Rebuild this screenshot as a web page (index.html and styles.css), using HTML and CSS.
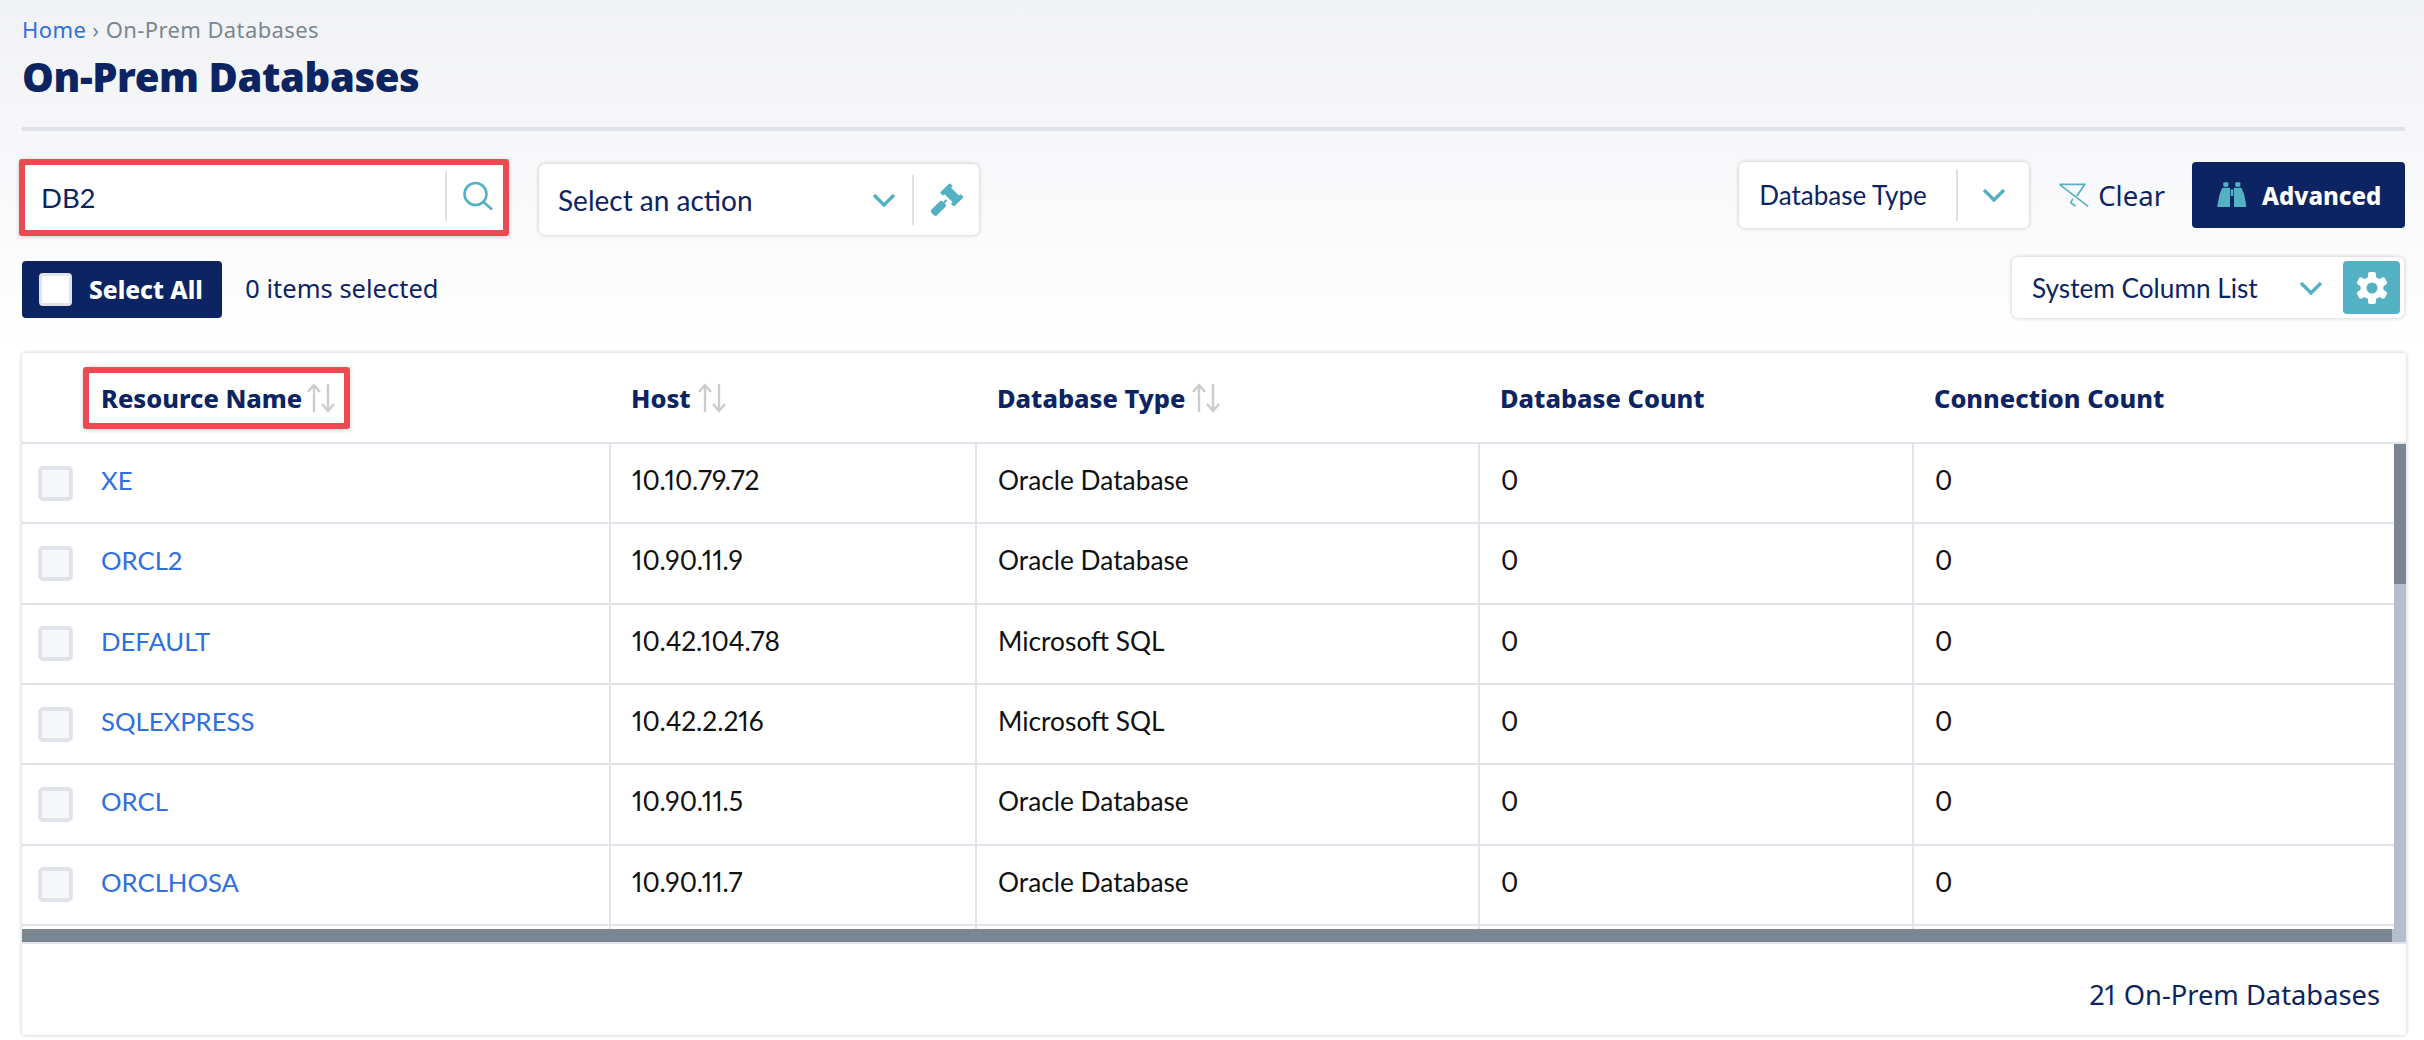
FILE: index.html
```html
<!DOCTYPE html>
<html>
<head>
  <title>On-Prem Databases</title>
  <link rel="stylesheet" href="styles.css">
</head>
<body>
  <div class="breadcrumb"><a href="#">Home</a> › On-Prem Databases</div>
  <h1>On-Prem Databases</h1>
  <hr class="rule">

  <div class="toolbar">
    <div class="search">
      <span class="search-text">DB2</span>
      <span class="search-btn">
        <svg width="32" height="30" viewBox="0 0 32 30"><circle cx="13.5" cy="13" r="11" fill="none" stroke="#54b1c4" stroke-width="2.6"/><line x1="21.5" y1="21" x2="30" y2="28.5" stroke="#54b1c4" stroke-width="2.8"/></svg>
      </span>
    </div>
    <div class="card action-select">
      <span class="select-text">Select an action</span>
      <svg class="chevron" width="24" height="14" viewBox="0 0 24 14"><polyline points="2,2 12,12 22,2" fill="none" stroke="#54b1c4" stroke-width="3.4"/></svg>
      <span class="action-btn">
        <svg width="33" height="33" viewBox="93 80 100 100"><g transform="translate(156 116) rotate(45)" fill="#54b1c4"><path d="M-30 -17 Q-30 -21 -26 -21 H-20 Q-17 -21 -17 -18 V-14 H17 V-18 Q17 -21 20 -21 H26 Q30 -21 30 -17 V17 Q30 21 26 21 H20 Q17 21 17 18 V14 H-17 V18 Q-17 21 -20 21 H-26 Q-30 21 -30 17 Z"/><path d="M-3 22 H3 V34 H8 Q12 34 12 38 V74 Q12 82 4 82 H-4 Q-12 82 -12 74 V38 Q-12 34 -8 34 H-3 Z"/></g></svg>
      </span>
    </div>
    <div class="spacer"></div>
    <div class="card type-select">
      <span class="select-text type-text">Database Type</span>
      <span class="type-arrow">
        <svg class="chevron" width="24" height="14" viewBox="0 0 24 14"><polyline points="2,2 12,12 22,2" fill="none" stroke="#54b1c4" stroke-width="3.4"/></svg>
      </span>
    </div>
    <a class="clear" href="#">
      <svg width="32" height="25" viewBox="60 65 95 75"><path d="M64 69 H140 L116 104 M64 69 L150 135 M104 112 L98 124 L112 134" fill="none" stroke="#54b1c4" stroke-width="5"/></svg>
      Clear
    </a>
    <button class="advanced">
      <svg width="30" height="26" viewBox="534 64 90 78"><g fill="#54b1c4"><rect x="553" y="65" width="15" height="13" rx="3"/><rect x="589" y="65" width="15" height="13" rx="3"/><path d="M550 81 H573 V139 H536 Q534 139 535 135 L542 100 Z"/><path d="M585 81 H607 L615 100 L622 135 Q622 139 620 139 H585 Z"/><rect x="575" y="86" width="8" height="20"/></g></svg>
      Advanced
    </button>
  </div>

  <div class="toolbar second">
    <button class="select-all"><span class="box"></span>Select All</button>
    <span class="count">0 items selected</span>
    <div class="spacer"></div>
    <div class="card column-select">
      <span class="select-text column-text">System Column List</span>
      <svg class="chevron" width="24" height="14" viewBox="0 0 24 14"><polyline points="2,2 12,12 22,2" fill="none" stroke="#54b1c4" stroke-width="3.4"/></svg>
      <span class="gear">
        <svg width="32" height="32" viewBox="0 0 32 32"><g fill="#fff"><rect x="12" y="0" width="8" height="32" rx="2"/><rect x="12" y="0" width="8" height="32" rx="2" transform="rotate(60 16 16)"/><rect x="12" y="0" width="8" height="32" rx="2" transform="rotate(120 16 16)"/></g><circle cx="16" cy="16" r="8.5" fill="none" stroke="#fff" stroke-width="6"/><circle cx="16" cy="16" r="5.5" fill="#54b1c4"/></svg>
      </span>
    </div>
  </div>

  <div class="table-card">
    <div class="row head-row">
      <div class="head first"><span class="marked">Resource Name <svg class="sort" width="30" height="30" viewBox="0 0 30 30"><path d="M8 29 V2 M2 9 L8 2 L14 9 M22 1 V28 M16 21 L22 28 L28 21" fill="none" stroke="#cccccc" stroke-width="2.4"/></svg></span></div>
      <div class="head">Host <svg class="sort" width="30" height="30" viewBox="0 0 30 30"><path d="M8 29 V2 M2 9 L8 2 L14 9 M22 1 V28 M16 21 L22 28 L28 21" fill="none" stroke="#cccccc" stroke-width="2.4"/></svg></div>
      <div class="head">Database Type <svg class="sort" width="30" height="30" viewBox="0 0 30 30"><path d="M8 29 V2 M2 9 L8 2 L14 9 M22 1 V28 M16 21 L22 28 L28 21" fill="none" stroke="#cccccc" stroke-width="2.4"/></svg></div>
      <div class="head">Database Count</div>
      <div class="head">Connection Count</div>
    </div>

    <div class="table-body">
      <div class="rows">
        <div class="row">
          <div class="cell first"><span class="check"></span><a href="#">XE</a></div>
          <div class="cell">10.10.79.72</div>
          <div class="cell">Oracle Database</div>
          <div class="cell">0</div>
          <div class="cell">0</div>
        </div>
        <div class="row">
          <div class="cell first"><span class="check"></span><a href="#">ORCL2</a></div>
          <div class="cell">10.90.11.9</div>
          <div class="cell">Oracle Database</div>
          <div class="cell">0</div>
          <div class="cell">0</div>
        </div>
        <div class="row">
          <div class="cell first"><span class="check"></span><a href="#">DEFAULT</a></div>
          <div class="cell">10.42.104.78</div>
          <div class="cell">Microsoft SQL</div>
          <div class="cell">0</div>
          <div class="cell">0</div>
        </div>
        <div class="row">
          <div class="cell first"><span class="check"></span><a href="#">SQLEXPRESS</a></div>
          <div class="cell">10.42.2.216</div>
          <div class="cell">Microsoft SQL</div>
          <div class="cell">0</div>
          <div class="cell">0</div>
        </div>
        <div class="row">
          <div class="cell first"><span class="check"></span><a href="#">ORCL</a></div>
          <div class="cell">10.90.11.5</div>
          <div class="cell">Oracle Database</div>
          <div class="cell">0</div>
          <div class="cell">0</div>
        </div>
        <div class="row">
          <div class="cell first"><span class="check"></span><a href="#">ORCLHOSA</a></div>
          <div class="cell">10.90.11.7</div>
          <div class="cell">Oracle Database</div>
          <div class="cell">0</div>
          <div class="cell">0</div>
        </div>
        <div class="row">
          <div class="cell first"></div>
          <div class="cell"></div>
          <div class="cell"></div>
          <div class="cell"></div>
          <div class="cell"></div>
        </div>
      </div>
      <div class="vscroll"><div class="vthumb"></div></div>
      <div class="hscroll"></div>
      <div class="scroll-corner"></div>
    </div>

    <div class="table-foot">21 On-Prem Databases</div>
  </div>
</body>
</html>
```

FILE: styles.css
```css
* {
  box-sizing: border-box;
}
body {
  margin: 0;
  padding: 0 19px 0 22px;
  height: 1040px;
  overflow: hidden;
  font-family: "Lato", sans-serif;
  font-variant-numeric: proportional-nums;
  color: #0c2461;
  background: linear-gradient(#f1f2f5, #ffffff 350px);
}
a {
  color: #2f6fe0;
  text-decoration: none;
}
.breadcrumb {
  padding-top: 15px;
  height: 43px;
  font-family: "Noto Sans", sans-serif;
  font-size: 22px;
  letter-spacing: 0.4px;
  line-height: 28px;
  color: #7a8691;
}
h1 {
  margin: 0;
  height: 84px;
  font-family: "Noto Sans", sans-serif;
  font-size: 40px;
  font-weight: 900;
  line-height: 68px;
  letter-spacing: -0.4px;
}
.rule {
  margin: 0;
  height: 4px;
  border: none;
  background-color: #e0e3e9;
}

/* toolbars */
.toolbar {
  display: flex;
  align-items: flex-start;
  height: 77px;
  margin-top: 28px;
}
.toolbar.second {
  height: 61px;
  margin-top: 21px;
}
.spacer {
  flex: 1;
}
.card {
  display: flex;
  align-items: center;
  background-color: #fff;
  border-radius: 6px;
  box-shadow: 0 0 4px rgba(0,0,0,0.22);
}
.select-text {
  font-size: 28px;
}
.chevron {
  flex: none;
}
.search {
  display: flex;
  align-items: center;
  width: 490px;
  height: 77px;
  margin-left: -3px;
  background-color: #fff;
  border: 6px solid #e84c51;
  border-radius: 3px;
  box-shadow: 0 1px 4px rgba(0,0,0,0.2);
}
.search-text {
  flex: 1;
  padding-left: 16px;
  font-size: 27.5px;
}
.search-btn {
  display: flex;
  align-items: center;
  width: 58px;
  height: 50px;
  margin-top: -3px;
  padding-left: 15px;
  border-left: 2px solid #dde1e7;
}
.action-select {
  width: 440px;
  height: 71px;
  margin: 5px 0 0 30px;
  padding-left: 19px;
}
.action-select .select-text {
  width: 314px;
}
.action-btn {
  display: flex;
  align-items: center;
  width: 67px;
  height: 50px;
  margin-left: 16px;
  padding-left: 17px;
  border-left: 2px solid #dde1e7;
}
.type-select {
  width: 290px;
  height: 66px;
  margin-top: 3px;
  padding-left: 20px;
}
.type-text {
  width: 197px;
  font-size: 26px;
}
.type-arrow {
  display: flex;
  align-items: center;
  height: 52px;
  padding-left: 24px;
  border-left: 2px solid #dde1e7;
}
.clear {
  display: flex;
  align-items: center;
  gap: 8px;
  height: 66px;
  margin: 3px 27px 0 29px;
  font-family: "Noto Sans", sans-serif;
  font-size: 27.5px;
  color: #0c2461;
}
.advanced {
  display: flex;
  align-items: center;
  gap: 15px;
  width: 213px;
  height: 66px;
  margin-top: 3px;
  padding: 0 0 0 25px;
  border: none;
  border-radius: 4px;
  background-color: #0c2461;
  color: #fff;
  font-family: "Noto Sans", sans-serif;
  font-size: 24px;
  font-weight: 800;
}
.select-all {
  display: flex;
  align-items: center;
  gap: 17px;
  width: 200px;
  height: 57px;
  margin-top: 4px;
  padding: 0 0 0 17px;
  border: none;
  border-radius: 4px;
  background-color: #0c2461;
  color: #fff;
  font-family: "Noto Sans", sans-serif;
  font-size: 24.5px;
  font-weight: 800;
}
.box {
  width: 33px;
  height: 33px;
  background-color: #fff;
  border: 3px solid #e0e3e9;
  border-radius: 4px;
}
.count {
  margin: 14px 0 0 23px;
  font-family: "Noto Sans", sans-serif;
  font-size: 25.5px;
}
.column-select {
  width: 392px;
  height: 61px;
  margin-right: 1px;
  padding-left: 20px;
}
.column-text {
  width: 267px;
  font-size: 26.2px;
}
.gear {
  display: flex;
  align-items: center;
  justify-content: center;
  width: 57px;
  height: 53px;
  margin-left: 20px;
  background-color: #54b1c4;
  border-radius: 4px;
}

/* table */
.table-card {
  width: 2384px;
  height: 682px;
  margin-top: 35px;
  background-color: #fff;
  border-radius: 3px;
  box-shadow: 0 0 4px rgba(0,0,0,0.22);
  overflow: hidden;
}
.row {
  display: grid;
  grid-template-columns: 587px 366px 503px 434px 1fr;
  height: 80.33px;
  border-bottom: 2px solid #e0e4ea;
}
.head-row {
  height: 91px;
}
.head {
  display: flex;
  align-items: center;
  gap: 6px;
  padding-left: 22px;
  font-family: "Noto Sans", sans-serif;
  font-size: 25.4px;
  font-weight: 800;
}
.head.first {
  padding-left: 61px;
}
.marked {
  display: flex;
  align-items: center;
  gap: 4px;
  height: 62px;
  padding: 0 8px 0 12px;
  border: 6px solid #e84c51;
  border-radius: 3px;
  box-shadow: 0 1px 4px rgba(0,0,0,0.2);
}
.sort {
  flex: none;
}
.table-body {
  display: grid;
  grid-template-columns: 1fr 12px;
  grid-template-rows: 485px 13px;
  border-bottom: 2px solid #e0e4ea;
}
.rows {
  height: 485px;
  overflow: hidden;
}
.cell {
  display: flex;
  align-items: center;
  padding: 0 0 6px 21px;
  border-left: 2px solid #e0e4ea;
  font-size: 26.3px;
  color: #111;
}
.cell.first {
  padding-left: 16px;
  gap: 28px;
  border-left: none;
}
.cell a {
  font-size: 25.7px;
}
.check {
  flex: none;
  width: 35px;
  height: 35px;
  margin-top: 6px;
  background-color: #f6f7f9;
  border: 4px solid #e0e3e9;
  border-radius: 5px;
}
.vscroll {
  background-color: #b6bdcc;
}
.vthumb {
  height: 140px;
  background-color: #7a8691;
}
.hscroll {
  background-color: #7a8691;
  margin-right: 2px;
}
.scroll-corner {
  background-color: #b6bdcc;
  margin-left: -2px;
}
.table-foot {
  padding: 34px 26px 0 0;
  text-align: right;
  font-family: "Noto Sans", sans-serif;
  font-size: 27.3px;
  line-height: 34px;
}
```
